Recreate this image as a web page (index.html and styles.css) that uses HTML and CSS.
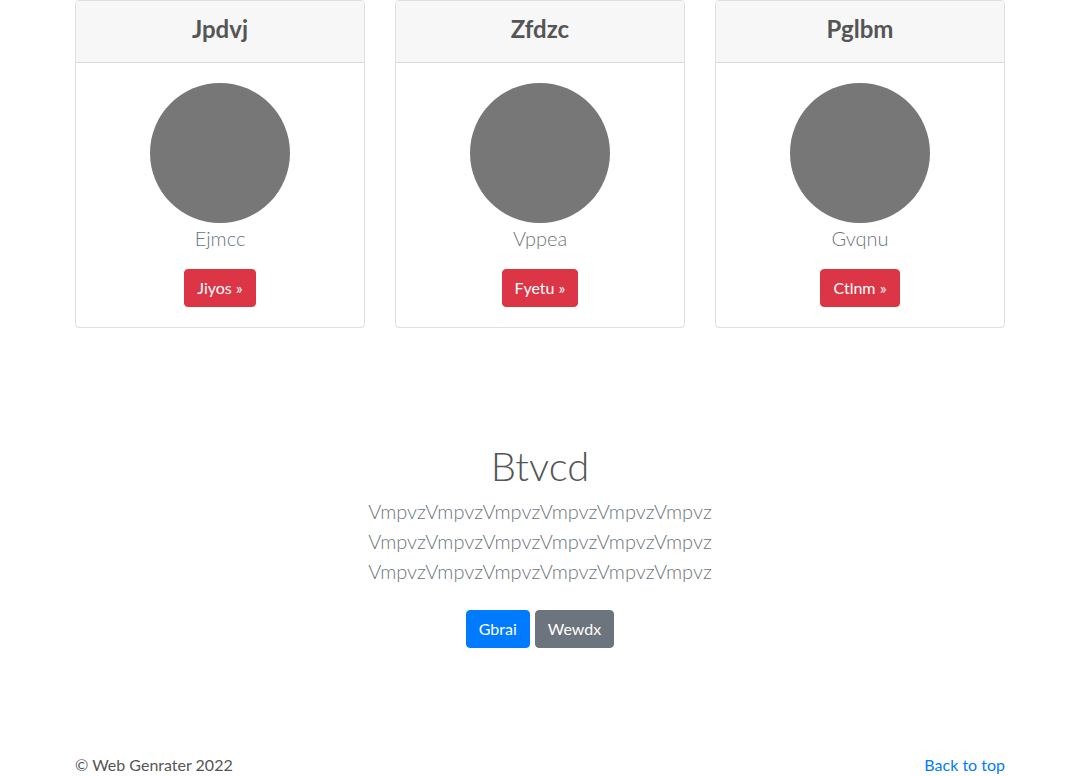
FILE: index.html
```html
<!DOCTYPE html>
<html lang="en">
<head>
<meta charset="utf-8">
<title>Web Genrater</title>
<link rel="stylesheet" href="styles.css">
</head>
<body>
<main>
  <div class="container">
    <div class="card-row">
      <div class="card">
        <div class="card-header"><h4 class="card-title">Jpdvj</h4></div>
        <div class="card-body">
          <div class="avatar"></div>
          <p class="lead muted">Ejmcc</p>
          <a class="btn btn-danger" href="#">Jiyos &raquo;</a>
        </div>
      </div>
      <div class="card">
        <div class="card-header"><h4 class="card-title">Zfdzc</h4></div>
        <div class="card-body">
          <div class="avatar"></div>
          <p class="lead muted">Vppea</p>
          <a class="btn btn-danger" href="#">Fyetu &raquo;</a>
        </div>
      </div>
      <div class="card">
        <div class="card-header"><h4 class="card-title">Pglbm</h4></div>
        <div class="card-body">
          <div class="avatar"></div>
          <p class="lead muted">Gvqnu</p>
          <a class="btn btn-danger" href="#">Ctlnm &raquo;</a>
        </div>
      </div>
    </div>
  </div>

  <section class="hero">
    <h1 class="hero-title">Btvcd</h1>
    <p class="lead hero-text">VmpvzVmpvzVmpvzVmpvzVmpvzVmpvz VmpvzVmpvzVmpvzVmpvzVmpvzVmpvz VmpvzVmpvzVmpvzVmpvzVmpvzVmpvz</p>
    <div class="hero-actions">
      <a class="btn btn-primary" href="#">Gbrai</a>
      <a class="btn btn-secondary" href="#">Wewdx</a>
    </div>
  </section>
</main>

<footer class="container footer">
  <span class="copy">&copy; Web Genrater 2022</span>
  <a class="top-link" href="#">Back to top</a>
</footer>
</body>
</html>
```

FILE: styles.css
```css
* { box-sizing: border-box; }

html, body {
  margin: 0;
  padding: 0;
}

body {
  font-family: "Segoe UI", Lato, "Noto Sans", "Liberation Sans", sans-serif;
  font-size: 16px;
  line-height: 1.5;
  color: #555;
  background: #fff;
}

.container {
  width: 960px;
  margin: 0 auto;
  padding: 0 15px;
}

.card-row {
  display: flex;
  gap: 30px;
}

.card {
  width: 290px;
  border: 1px solid rgba(0, 0, 0, 0.125);
  border-radius: 4px;
  text-align: center;
  overflow: hidden;
}

.card-header {
  background: #f7f7f7;
  border-bottom: 1px solid rgba(0, 0, 0, 0.125);
  padding: 14px 20px 12px;
}

.card-title {
  margin: 0 0 6px;
  font-size: 24px;
  line-height: 28.8px;
  font-weight: 700;
  color: #555;
}

.card-body {
  padding: 20px;
}

.avatar {
  width: 140px;
  height: 140px;
  border-radius: 50%;
  background: #777;
  margin: 0 auto;
}

.lead {
  font-size: 20px;
  line-height: 30px;
  font-weight: 300;
  margin: 0 0 16px;
}

.muted {
  color: #6c757d;
}

.btn {
  display: inline-block;
  padding: 6px 12px;
  font-size: 16px;
  line-height: 24px;
  border: 1px solid transparent;
  border-radius: 4px;
  color: #fff;
  text-decoration: none;
  font-weight: 400;
}

.btn-danger { background: #dc3545; border-color: #dc3545; }
.btn-primary { background: #007bff; border-color: #007bff; }
.btn-secondary { background: #6c757d; border-color: #6c757d; }

.hero {
  text-align: center;
  padding-top: 114px;
}

.hero-title {
  margin: 0 0 6px;
  font-size: 40px;
  line-height: 48px;
  font-weight: 300;
  color: #555;
}

.hero-text {
  width: min-content;
  margin: 0 auto;
  color: #6c757d;
}

.hero-actions {
  display: flex;
  justify-content: center;
  gap: 5px;
  margin-top: 24px;
}

.footer {
  display: flex;
  justify-content: space-between;
  align-items: center;
  margin-top: 105px;
  color: #555;
}

.top-link {
  color: #007bff;
  text-decoration: none;
}
```
